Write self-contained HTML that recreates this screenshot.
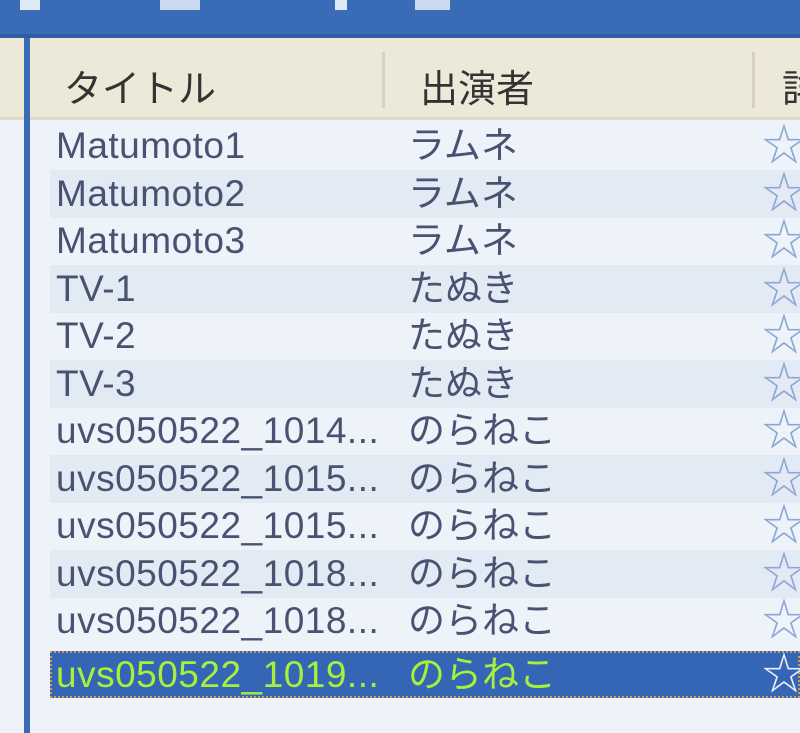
<!DOCTYPE html>
<html><head><meta charset="utf-8"><style>
*{margin:0;padding:0;box-sizing:border-box}
body{width:800px;height:733px;overflow:hidden;background:#eef2f9;position:relative;font-family:"Liberation Sans","Noto Sans CJK JP",sans-serif}
.top{position:absolute;left:0;top:0;width:800px;height:34px;background:#3a6bb6}
.top i{position:absolute;top:0;height:10px;background:#dfe8f5}
.line{position:absolute;left:0;top:34px;width:800px;height:4px;background:#2f5ea8}
.hdr{position:absolute;left:0;top:38px;width:800px;height:82px;background:#ece9d8;border-bottom:3px solid #ddd9c3}
.hdr span{position:absolute;top:20px;font-size:38px;color:#333}
.sep{position:absolute;top:14px;width:3px;height:56px;background:#d6d2bd}
.vl{position:absolute;left:24px;top:38px;width:6px;height:695px;background:#3a6bb6}
.row{position:absolute;left:50px;width:750px;height:48px;font-size:37px;color:#4a5272;line-height:48px}
.row.e{background:#e2eaf3}
.row .a{position:absolute;left:6px;letter-spacing:0.5px}
.row .b{position:absolute;left:358px}
.row .s{position:absolute;left:712px;top:0;font-size:44px;color:#8da6d8;line-height:48px}
.sel{background:#3565b5;color:#a6f03c;outline:2px dotted #c99a5a;outline-offset:-2px}
.sel .s{color:#e8eefa}
</style></head><body>
<div class="top"><i style="left:20px;width:20px"></i><i style="left:160px;width:40px;background:#c9daf0"></i><i style="left:335px;width:12px"></i><i style="left:415px;width:35px;background:#c9daf0"></i></div>
<div class="line"></div>
<div class="hdr"><span style="left:64px">タイトル</span><div class="sep" style="left:382px"></div><span style="left:420px">出演者</span><div class="sep" style="left:752px"></div><span style="left:782px">詳</span></div>
<div class="vl"></div>
<div class="row" style="top:122px"><span class="a">Matumoto1</span><span class="b">ラムネ</span><span class="s">☆</span></div>
<div class="row e" style="top:170px"><span class="a">Matumoto2</span><span class="b">ラムネ</span><span class="s">☆</span></div>
<div class="row" style="top:217px"><span class="a">Matumoto3</span><span class="b">ラムネ</span><span class="s">☆</span></div>
<div class="row e" style="top:265px"><span class="a">TV-1</span><span class="b">たぬき</span><span class="s">☆</span></div>
<div class="row" style="top:312px"><span class="a">TV-2</span><span class="b">たぬき</span><span class="s">☆</span></div>
<div class="row e" style="top:360px"><span class="a">TV-3</span><span class="b">たぬき</span><span class="s">☆</span></div>
<div class="row" style="top:407px"><span class="a">uvs050522_1014...</span><span class="b">のらねこ</span><span class="s">☆</span></div>
<div class="row e" style="top:455px"><span class="a">uvs050522_1015...</span><span class="b">のらねこ</span><span class="s">☆</span></div>
<div class="row" style="top:502px"><span class="a">uvs050522_1015...</span><span class="b">のらねこ</span><span class="s">☆</span></div>
<div class="row e" style="top:550px"><span class="a">uvs050522_1018...</span><span class="b">のらねこ</span><span class="s">☆</span></div>
<div class="row" style="top:597px"><span class="a">uvs050522_1018...</span><span class="b">のらねこ</span><span class="s">☆</span></div>
<div class="row sel" style="top:651px;height:47px"><span class="a">uvs050522_1019...</span><span class="b">のらねこ</span><span class="s">☆</span></div>
</body></html>
